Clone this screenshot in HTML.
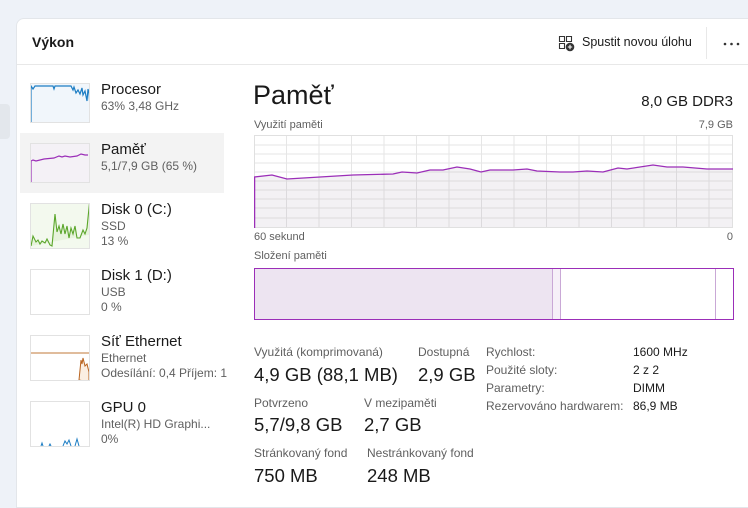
<!DOCTYPE html>
<html><head><meta charset="utf-8"><style>
*{margin:0;padding:0;box-sizing:border-box}
body{width:748px;height:499px;overflow:hidden;background:#eef2f8;font-family:"Segoe UI","Liberation Sans",sans-serif;color:#1a1a1a;position:relative}
.a{position:absolute;white-space:nowrap}
.card{position:absolute;left:16px;top:18px;width:740px;height:490px;background:#fff;border-radius:8px 0 0 0;border:1px solid #e3e6ea}
.thumb{position:absolute;left:30px;width:60px;border:1px solid #e2e2e2;background:#fff}
.t{font-size:15px;color:#1a1a1a}
.s{font-size:12px;color:#5f5f5f}
.l{font-size:12px;color:#5f5f5f}
.v{font-size:18.5px;color:#1a1a1a}
</style></head><body>
<div class="a" style="left:0;top:104px;width:10px;height:35px;background:#e3e7ec;border-radius:0 4px 4px 0"></div>
<div class="card"></div>
<div class="a" style="left:17px;top:64px;width:731px;height:1px;background:#e8e8e8"></div>
<div class="a" style="left:32px;top:34px;font-size:14px;font-weight:bold;color:#1a1a1a">Výkon</div>
<svg class="a" style="left:558px;top:35px" width="17" height="17" viewBox="0 0 17 17"><path d="M1.5 1.5h5v5h-5zM8.5 1.5h5v5h-5zM1.5 8.5h5v5h-5z" fill="none" stroke="#333" stroke-width="1.1"/><circle cx="12" cy="12" r="4.3" fill="#333"/><path d="M12 9.8v4.4M9.8 12h4.4" stroke="#fff" stroke-width="1.1"/></svg>
<div class="a" style="left:582px;top:35px;font-size:12.5px;color:#1a1a1a">Spustit novou úlohu</div>
<div class="a" style="left:706px;top:27px;width:1px;height:32px;background:#e8e8e8"></div>
<svg class="a" style="left:723px;top:42px" width="18" height="4"><circle cx="2" cy="2" r="1.3" fill="#333"/><circle cx="8.5" cy="2" r="1.3" fill="#333"/><circle cx="15" cy="2" r="1.3" fill="#333"/></svg>

<div class="a" style="left:20px;top:133px;width:204px;height:60px;background:#f3f3f3"></div>
<div class="thumb" style="top:83px;height:40px;background:#f1f6fb"><svg width="58" height="38" viewBox="0 0 58 38"><path d="M0 38V2l2 3 2-3h18l1 3 1-3h16l2 4 1-3 2 6 2-3 2 4 2-6 1 7 2-4 2 10 1-12 1 4 1 14" fill="none" stroke="#1e7ec4" stroke-width="1.2"/></svg></div>
<div class="a t" style="left:101px;top:81px">Procesor</div><div class="a s" style="left:101px;top:99px">63% 3,48 GHz</div>
<div class="thumb" style="top:143px;height:40px;background:#f4f1f6"><svg width="58" height="38" viewBox="0 0 58 38"><path d="M0 38V17l2-1 3 1 8-2 10-1 5-2 3 1 3-1 5 1 7-1 4-2 4 1 3 0" fill="none" stroke="#9b2eb8" stroke-width="1.2"/></svg></div>
<div class="a t" style="left:101px;top:141px">Paměť</div><div class="a s" style="left:101px;top:159px">5,1/7,9 GB (65 %)</div>
<div class="thumb" style="top:203px;height:46px;background:#f3f9ee"><svg width="58" height="44" viewBox="0 0 58 44"><path d="M0 42l2-10 3 6 2-2 2 4 2-3 3 2 2-4 3 6 2 1 3-32 2 18 2-6 2 8 2-10 2 10 2-8 2 12 2-10 2 6 2-8 2 12 3 0 3-8 2 4 2-6 3-30 2 24 1 12" fill="#e7f3dc" stroke="#5aa62a" stroke-width="1.1"/></svg></div>
<div class="a t" style="left:101px;top:201px">Disk 0 (C:)</div><div class="a s" style="left:101px;top:219px">SSD</div><div class="a s" style="left:101px;top:234px">13 %</div>
<div class="thumb" style="top:269px;height:46px"></div>
<div class="a t" style="left:101px;top:267px">Disk 1 (D:)</div><div class="a s" style="left:101px;top:285px">USB</div><div class="a s" style="left:101px;top:300px">0 %</div>
<div class="thumb" style="top:335px;height:46px"><svg width="58" height="44" viewBox="0 0 58 44"><path d="M0 17h58" stroke="#c0783a" stroke-width="1"/><path d="M48 44l2-20 1 4 1-6 2 8 2-2 2 8v10z" fill="#fbeee2" stroke="#b8621e" stroke-width="1"/></svg></div>
<div class="a t" style="left:101px;top:333px">Síť Ethernet</div><div class="a s" style="left:101px;top:351px">Ethernet</div><div class="a s" style="left:101px;top:366px;width:126px;overflow:hidden">Odesílání: 0,4 Příjem: 17</div>
<div class="thumb" style="top:401px;height:46px"><svg width="58" height="44" viewBox="0 0 58 44"><path d="M10 44l1-3 1 3M18 44l1-2 1 2M32 44l2-5 2 3 2-4 2 6M44 44l2-7 2 7" fill="none" stroke="#1e7ec4" stroke-width="1"/></svg></div>
<div class="a t" style="left:101px;top:399px">GPU 0</div><div class="a s" style="left:101px;top:417px">Intel(R) HD Graphi...</div><div class="a s" style="left:101px;top:432px">0%</div>

<div class="a" style="left:253px;top:80px;font-size:27px;color:#1a1a1a">Paměť</div>
<div class="a" style="right:15px;top:93px;font-size:15px;color:#1a1a1a">8,0 GB DDR3</div>
<div class="a l" style="left:254px;top:119px;font-size:11px">Využití paměti</div>
<div class="a l" style="right:15px;top:119px;font-size:11px">7,9 GB</div>
<svg class="a" style="left:254px;top:135px" width="480" height="94" viewBox="254 135 480 94">
<g stroke="#e6e6e6" stroke-width="1">
<path d="M254 145h479M254 154h479M254 163h479M254 172h479M254 181h479M254 190h479M254 199h479M254 208h479M254 218h479"/>
<path d="M286.5 135v93M319 135v93M351.5 135v93M384 135v93M416.5 135v93M449 135v93M481.5 135v93M514 135v93M546.5 135v93M579 135v93M611.5 135v93M644 135v93M676.5 135v93M709 135v93"/>
</g>
<path d="M254 228V177L272 175 287 179 320 177 353 175 393 174 402 172 417 173 430 170 443 170 457 167 470 169 481 172 490 170 513 170 527 169 537 171 560 172 573 172 587 171 603 172 618 168 627 169 653 165 667 167 683 167 707 169 733 169V228Z" fill="rgba(140,120,150,0.1)"/>
<rect x="254.5" y="135.5" width="478" height="92" fill="none" stroke="#e0e0e0"/>
<path d="M254.6 228V177L272 175 287 179 320 177 353 175 393 174 402 172 417 173 430 170 443 170 457 167 470 169 481 172 490 170 513 170 527 169 537 171 560 172 573 172 587 171 603 172 618 168 627 169 653 165 667 167 683 167 707 169 733 169" fill="none" stroke="#9b2eb8" stroke-width="1.3"/>
</svg>
<div class="a l" style="left:254px;top:231px;font-size:11px">60 sekund</div>
<div class="a l" style="right:15px;top:231px;font-size:11px">0</div>
<div class="a l" style="left:254px;top:250px;font-size:11px">Složení paměti</div>
<div class="a" style="left:254px;top:268px;width:480px;height:52px;border:1px solid #9b2eb8;background:#fff">
<div class="a" style="left:0;top:0;width:298px;height:50px;background:#ede4f1;border-right:1px solid #c9a8d6"></div>
<div class="a" style="left:298px;top:0;width:8px;height:50px;background:#f6f0f8;border-right:1px solid #c9a8d6"></div>
<div class="a" style="left:460px;top:0;width:1px;height:50px;background:#c9a8d6"></div>
</div>

<div class="a l" style="left:254px;top:345px">Využitá (komprimovaná)</div>
<div class="a v" style="left:254px;top:364px">4,9 GB (88,1 MB)</div>
<div class="a l" style="left:418px;top:345px">Dostupná</div>
<div class="a v" style="left:418px;top:364px">2,9 GB</div>
<div class="a l" style="left:254px;top:396px">Potvrzeno</div>
<div class="a v" style="left:254px;top:414px">5,7/9,8 GB</div>
<div class="a l" style="left:364px;top:396px">V mezipaměti</div>
<div class="a v" style="left:364px;top:414px">2,7 GB</div>
<div class="a l" style="left:254px;top:446px">Stránkovaný fond</div>
<div class="a v" style="left:254px;top:465px">750 MB</div>
<div class="a l" style="left:367px;top:446px">Nestránkovaný fond</div>
<div class="a v" style="left:367px;top:465px">248 MB</div>

<div class="a l" style="left:486px;top:345px">Rychlost:</div><div class="a" style="left:633px;top:345px;font-size:12px">1600 MHz</div>
<div class="a l" style="left:486px;top:363px">Použité sloty:</div><div class="a" style="left:633px;top:363px;font-size:12px">2 z 2</div>
<div class="a l" style="left:486px;top:381px">Parametry:</div><div class="a" style="left:633px;top:381px;font-size:12px">DIMM</div>
<div class="a l" style="left:486px;top:399px">Rezervováno hardwarem:</div><div class="a" style="left:633px;top:399px;font-size:12px">86,9 MB</div>
</body></html>
